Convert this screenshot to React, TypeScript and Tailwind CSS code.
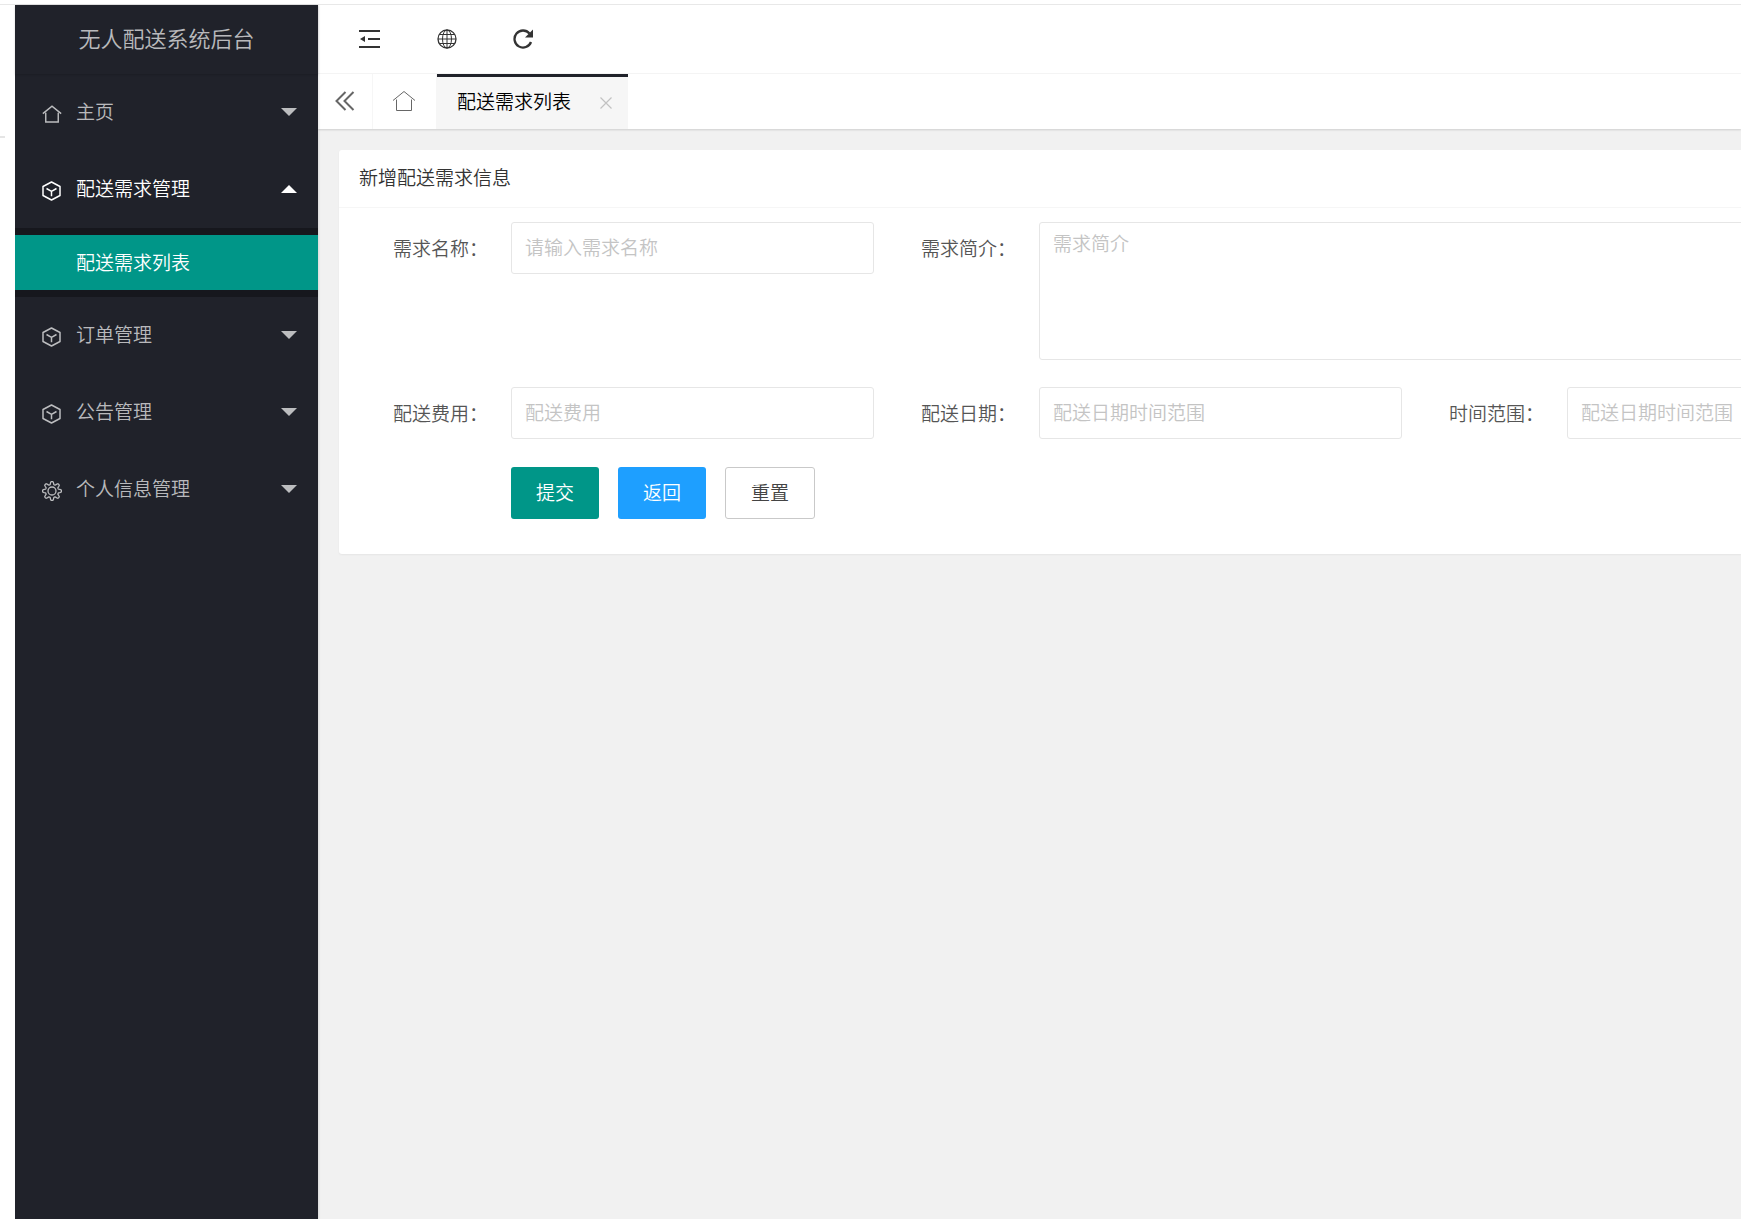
import React, { useState } from 'react';

type IconProps = { className?: string };

const HomeIcon: React.FC<IconProps & { strokeWidth?: number }> = ({ className, strokeWidth = 1 }) => (
  <svg viewBox="0 0 24 22" className={className} fill="none" stroke="currentColor" strokeWidth={strokeWidth} aria-hidden="true">
    <path d="M1 10.5 12 1.5l11 9M4.5 9.5v11h15v-11" />
  </svg>
);

const MenuHomeIcon: React.FC<IconProps> = ({ className }) => <HomeIcon className={className} strokeWidth={1.7} />;

const CubeIcon: React.FC<IconProps> = ({ className }) => (
  <svg viewBox="0 0 20 20" className={className} fill="none" stroke="currentColor" strokeWidth="1.5" aria-hidden="true">
    <path d="M9.5 1 18 5.5v9L9.5 19 1 14.5v-9zM4.5 7.5l5 2.8 5-2.8M9.5 10.3v5" strokeLinejoin="round" />
  </svg>
);

// eight rounded teeth around the hub
const gearPoints = Array.from({ length: 96 }, (_, i) => {
  const a = (i / 96) * Math.PI * 2;
  const wave = Math.cos(8 * a);
  const r = 8 + 1.5 * Math.tanh(2 * wave);
  return `${(10 + r * Math.sin(a)).toFixed(2)},${(10 - r * Math.cos(a)).toFixed(2)}`;
}).join(' ');

const GearIcon: React.FC<IconProps> = ({ className }) => (
  <svg viewBox="0 0 20 20" className={className} fill="none" stroke="currentColor" strokeWidth="1.3" strokeLinejoin="round" aria-hidden="true">
    <polygon points={gearPoints} />
    <circle cx="10" cy="10" r="4" />
  </svg>
);

const ShrinkIcon: React.FC<IconProps> = ({ className }) => (
  <svg viewBox="0 0 22 20" className={className} fill="currentColor" aria-hidden="true">
    <path d="M0 1h21v2H0zM9 9h12v2H9zM0 17h21v2H0zM1 10l5-3v6z" />
  </svg>
);

const GlobeIcon: React.FC<IconProps> = ({ className }) => (
  <svg viewBox="0 0 20 20" className={className} fill="none" stroke="currentColor" aria-hidden="true">
    <circle cx="10" cy="10" r="9" strokeWidth="1.3" />
    <ellipse cx="10" cy="10" rx="4.5" ry="9" />
    <path d="M10 1v18M1 10h18M2.5 5.500h15M2.5 14.500h15" />
  </svg>
);

const RefreshIcon: React.FC<IconProps> = ({ className }) => (
  <svg viewBox="0 0 20 20" className={className} aria-hidden="true">
    <path d="M16.5 4.500A8.500 8.500 0 1 0 18 13" fill="none" stroke="currentColor" strokeWidth="2.3" />
    <path d="M20 .5v8h-8z" fill="currentColor" />
  </svg>
);

const DoubleLeftIcon: React.FC<IconProps> = ({ className }) => (
  <svg viewBox="0 0 20 20" className={className} fill="none" stroke="currentColor" strokeWidth="2" aria-hidden="true">
    <path d="M10.500 1 1.500 10l9 9M18.500 1l-9 9 9 9" />
  </svg>
);

const CloseIcon: React.FC<IconProps> = ({ className }) => (
  <svg viewBox="0 0 12 12" className={className} fill="none" stroke="currentColor" strokeWidth="1.2" aria-hidden="true">
    <path d="m.5.5 11 11M11.500.5l-11 11" />
  </svg>
);

const Caret: React.FC<{ open: boolean }> = ({ open }) => (
  <svg viewBox="0 0 16 8" className={open ? 'h-2 w-4 rotate-180' : 'h-2 w-4'} fill="currentColor" aria-hidden="true">
    <path d="M0 0h16L8 8z" />
  </svg>
);

const menus = [
  { id: 'home', title: '主页', icon: MenuHomeIcon, children: [] },
  { id: 'demand', title: '配送需求管理', icon: CubeIcon, children: ['配送需求列表'] },
  { id: 'order', title: '订单管理', icon: CubeIcon, children: [] },
  { id: 'notice', title: '公告管理', icon: CubeIcon, children: [] },
  { id: 'profile', title: '个人信息管理', icon: GearIcon, children: [] },
];

const Sidebar: React.FC = () => {
  const [openId, setOpenId] = useState('demand');

  return (
    <aside className="relative z-10 w-[303px] shrink-0 bg-[#20222a] text-white/70 shadow-[1px_0_2px_rgba(0,0,0,0.1)]">
      <div className="flex h-[69px] items-center justify-center pb-1 text-[22px] shadow-[0_1px_2px_rgba(0,0,0,0.15)]">
        无人配送系统后台
      </div>
      <nav>
        {menus.map(({ id, title, icon: Icon, children }) => {
          const open = id === openId;
          return (
            <div key={id}>
              <button
                type="button"
                aria-expanded={open}
                onClick={() => setOpenId(open ? '' : id)}
                className={`flex h-[77px] w-full items-center pr-[21px] pb-0.5 pl-[27px] ${open ? 'text-white' : ''}`}
              >
                <Icon className="mt-1 h-5 w-5" />
                <span className="ml-3.5 flex-1 text-left">{title}</span>
                <Caret open={open} />
              </button>
              {open && children.length > 0 && (
                <div className="bg-black/30 py-[7px]">
                  {children.map(child => (
                    <a key={child} href="#" className="flex h-[55px] items-center bg-[#009688] pl-[61px] text-white">
                      {child}
                    </a>
                  ))}
                </div>
              )}
            </div>
          );
        })}
      </nav>
    </aside>
  );
};

const TopBar: React.FC = () => (
  <header className="flex h-[69px] items-center gap-14 border-b border-[#f6f6f6] bg-white pl-[41px] text-[#333]">
    <button type="button" aria-label="侧边伸缩"><ShrinkIcon className="h-5 w-[22px]" /></button>
    <button type="button" aria-label="前台"><GlobeIcon className="h-5 w-5" /></button>
    <button type="button" aria-label="刷新"><RefreshIcon className="h-5 w-5" /></button>
  </header>
);

const PageTabs: React.FC = () => (
  <div className="relative flex h-[55px] bg-white shadow-[0_1px_2px_rgba(0,0,0,0.15)]">
    <button type="button" aria-label="向左" className="flex w-[55px] items-center justify-center border-r border-[#f6f6f6] pb-0.5 text-[#666]">
      <DoubleLeftIcon className="h-5 w-5" />
    </button>
    <button type="button" aria-label="主页" className="flex w-16 items-center justify-center border-r border-[#f6f6f6] pr-0.5 pb-0.5 text-[#666]">
      <HomeIcon className="h-[22px] w-6" />
    </button>
    <div className="flex w-[191px] items-center border-t-[3px] border-[#20222a] bg-[#f6f6f6] pb-1 pl-5 text-black">
      <span className="flex-1">配送需求列表</span>
      <button type="button" aria-label="关闭" className="mt-1 mr-4 text-[#c2c2c2]"><CloseIcon className="h-3 w-3" /></button>
    </div>
  </div>
);

const labelClass = 'w-[151px] shrink-0 pt-3 pr-[23px] text-right leading-7 text-[#555]';
const controlClass = 'shrink-0 rounded-[3px] border border-[#e6e6e6] bg-white px-[13px] placeholder:text-[#c4c4c4] focus:outline-none';
const buttonClass = 'h-[52px] rounded-[3px] pb-0.5';

const TextField: React.FC<{ id: string; label: string; placeholder: string }> = ({ id, label, placeholder }) => (
  <div className="flex shrink-0">
    <label htmlFor={id} className={labelClass}>{label}：</label>
    <input id={id} type="text" placeholder={placeholder} className={`h-[52px] w-[363px] pb-1 ${controlClass}`} />
  </div>
);

const DemandForm: React.FC = () => (
  <section className="rounded-l-[3px] bg-white shadow-[0_1px_2px_rgba(0,0,0,0.05)]">
    <h2 className="flex h-[58px] items-center border-b border-[#f6f6f6] pb-0.5 pl-5 text-[#333]">新增配送需求信息</h2>
    <form className="pt-3.5 pb-[35px] pl-[21px]" onSubmit={e => e.preventDefault()}>
      <div className="flex gap-3.5">
        <TextField id="name" label="需求名称" placeholder="请输入需求名称" />
        <div className="flex shrink-0">
          <label htmlFor="intro" className={labelClass}>需求简介：</label>
          <textarea id="intro" placeholder="需求简介" className={`h-[138px] w-[891px] resize-none py-1.5 leading-7 ${controlClass}`} />
        </div>
      </div>
      <div className="mt-[27px] flex gap-3.5">
        <TextField id="fee" label="配送费用" placeholder="配送费用" />
        <TextField id="date" label="配送日期" placeholder="配送日期时间范围" />
        <TextField id="range" label="时间范围" placeholder="配送日期时间范围" />
      </div>
      <div className="mt-7 flex gap-[19px] pl-[151px]">
        <button type="submit" className={`w-[88px] bg-[#009688] text-white ${buttonClass}`}>提交</button>
        <button type="button" className={`w-[88px] bg-[#1e9fff] text-white ${buttonClass}`}>返回</button>
        <button type="reset" className={`w-[90px] border border-[#c9c9c9] bg-white text-[#444] ${buttonClass}`}>重置</button>
      </div>
    </form>
  </section>
);

const App: React.FC = () => (
  <div className="flex min-h-screen flex-col overflow-hidden bg-white pt-1 font-['Noto_Sans_CJK_SC',sans-serif] text-[19px] font-[350]">
    <div className="flex flex-1 border-t border-[#e8e8e8]">
      <div className="w-[15px] shrink-0 pt-[131px]">
        <div className="h-0.5 w-[5px] bg-[#e5e5e5]" />
      </div>
      <Sidebar />
      <div className="min-w-0 flex-1 overflow-hidden bg-[#f1f1f1]">
        <TopBar />
        <PageTabs />
        <main className="pt-[21px] pl-[21px]">
          <DemandForm />
        </main>
      </div>
    </div>
  </div>
);

export default App;
